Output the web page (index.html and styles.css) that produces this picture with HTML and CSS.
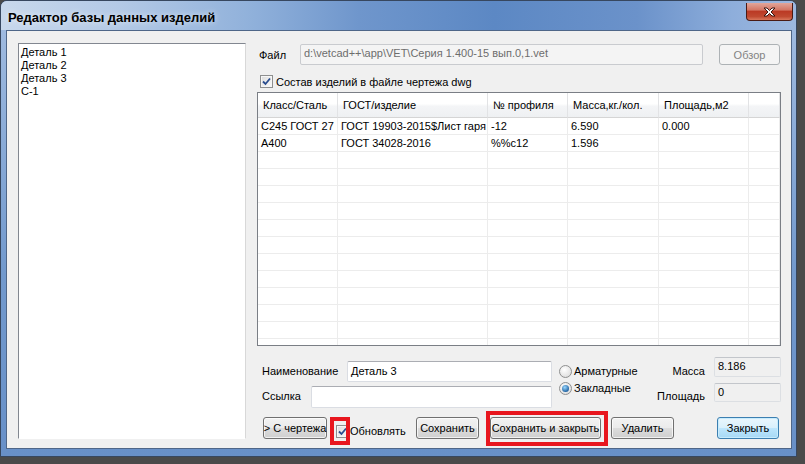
FILE: index.html
```html
<!DOCTYPE html>
<html lang="ru">
    <head>
        <meta charset="utf-8">
        <title>Редактор базы данных изделий</title>
        <link rel="stylesheet" href="styles.css">
    </head>
    <body>
        <div class="window">
            <div class="titleBar">
                <span class="titleText">Редактор базы данных изделий</span>
                <div class="closeBtn">
                    <svg width="13" height="10" viewBox="0 0 13 10"><polygon points="1,1 4,1 6.5,3.5 9,1 12,1 8,5 12,9 9,9 6.5,6.5 4,9 1,9 5,5" fill="#fff" stroke="#3b1510" stroke-width="1"/></svg>
                </div>
            </div>
            <div class="client">
                <div class="itemList">
                    <div>Деталь 1</div>
                    <div>Деталь 2</div>
                    <div>Деталь 3</div>
                    <div>С-1</div>
                </div>
                <div class="rightPanel">
                    <div class="fileRow">
                        <span class="fileLabel">Файл</span>
                        <div class="textBox disabled filePath">d:\vetcad++\app\VET\Серия 1.400-15 вып.0,1.vet</div>
                        <div class="button disabledButton browseButton">Обзор</div>
                    </div>
                    <div class="checkRow">
                        <span class="checkBox"><svg width="11" height="11" viewBox="0 0 11 11"><path d="M2 5.5 L4.5 8 L9 2.5" fill="none" stroke="#2a4d8f" stroke-width="1.8"/></svg></span>
                        <span>Состав изделий в файле чертежа dwg</span>
                    </div>
                    <div class="grid">
                        <table>
                            <tr>
                                <th class="colClass">Класс/Сталь</th>
                                <th class="colGost">ГОСТ/изделие</th>
                                <th class="colProfile">№ профиля</th>
                                <th class="colMass">Масса,кг./кол.</th>
                                <th class="colArea">Площадь,м2</th>
                                <th></th>
                            </tr>
                            <tr><td>С245 ГОСТ 27</td><td>ГОСТ 19903-2015$Лист гаря</td><td>-12</td><td>6.590</td><td>0.000</td><td></td></tr>
                            <tr><td>А400</td><td>ГОСТ 34028-2016</td><td>%%c12</td><td>1.596</td><td></td><td></td></tr>
                            <tr><td></td><td></td><td></td><td></td><td></td><td></td></tr>
                            <tr><td></td><td></td><td></td><td></td><td></td><td></td></tr>
                            <tr><td></td><td></td><td></td><td></td><td></td><td></td></tr>
                            <tr><td></td><td></td><td></td><td></td><td></td><td></td></tr>
                            <tr><td></td><td></td><td></td><td></td><td></td><td></td></tr>
                            <tr><td></td><td></td><td></td><td></td><td></td><td></td></tr>
                            <tr><td></td><td></td><td></td><td></td><td></td><td></td></tr>
                            <tr><td></td><td></td><td></td><td></td><td></td><td></td></tr>
                            <tr><td></td><td></td><td></td><td></td><td></td><td></td></tr>
                            <tr><td></td><td></td><td></td><td></td><td></td><td></td></tr>
                            <tr><td></td><td></td><td></td><td></td><td></td><td></td></tr>
                            <tr><td></td><td></td><td></td><td></td><td></td><td></td></tr>
                        </table>
                    </div>
                    <div class="formArea">
                        <div class="fieldColumn">
                            <div class="nameRow">
                                <span class="fieldLabel">Наименование</span>
                                <div class="textBox nameBox">Деталь 3</div>
                            </div>
                            <div class="linkRow">
                                <span class="fieldLabel">Ссылка</span>
                                <div class="textBox linkBox"></div>
                            </div>
                        </div>
                        <div class="radioColumn">
                            <div class="radioRow"><span class="radio"></span>Арматурные</div>
                            <div class="radioRow"><span class="radio selected"></span>Закладные</div>
                        </div>
                        <div class="valueColumn">
                            <div class="valueRow massRow">
                                <span>Масса</span>
                                <div class="textBox readOnly">8.186</div>
                            </div>
                            <div class="valueRow areaRow">
                                <span>Площадь</span>
                                <div class="textBox readOnly">0</div>
                            </div>
                        </div>
                    </div>
                    <div class="buttonRow">
                        <div class="button fromDrawing">&gt; С чертежа</div>
                        <div class="updateGroup">
                            <span class="checkBox"><svg width="11" height="11" viewBox="0 0 11 11"><path d="M2 5.5 L4.5 8 L9 2.5" fill="none" stroke="#2a4d8f" stroke-width="1.8"/></svg></span>
                            <span class="updateText">Обновлять</span>
                        </div>
                        <div class="button saveButton">Сохранить</div>
                        <div class="button saveCloseButton">Сохранить и закрыть</div>
                        <div class="button deleteButton">Удалить</div>
                        <div class="button defaultButton closeButton">Закрыть</div>
                    </div>
                </div>
            </div>
            <div class="markBox markUpdate"></div>
            <div class="markBox markSave"></div>
        </div>
    </body>
</html>
```

FILE: styles.css
```css
* {
    box-sizing: border-box;
}
html {
    background: #4a4a4a;
}
body {
    margin: 0;
    font-family: "Liberation Sans", Arial, sans-serif;
    font-size: 11px;
    color: #000;
}

/* window frame */
.window {
    position: relative;
    width: 797px;
    height: 457px;
    border: 1px solid #37475f;
    border-radius: 7px 7px 0 0;
    padding: 0 4px 7px 5px;
    background: linear-gradient(to bottom, #a4bee2, #7299cd 60%, #6890c8);
    display: flex;
    flex-direction: column;
}
.titleBar {
    height: 29px;
    margin: 0 -4px 0 -5px;
    padding: 0 3px 0 7px;
    display: flex;
    align-items: flex-start;
    border-radius: 6px 6px 0 0;
    background: linear-gradient(to right, #c8d8ec 0%, #b3c9e6 15%, #8fb0da 32%, #6f96cc 45%, #5c88c4 62%, #6b92ca 80%, #8eaedb 92%, #9db8df 100%);
}
.titleText {
    font-family: "Liberation Sans", Arial, sans-serif;
    font-weight: bold;
    font-size: 13px;
    line-height: 18px;
    padding-top: 8px;
    color: #000;
    text-shadow: 0 0 6px rgba(255, 255, 255, 0.7);
}
.closeBtn {
    margin-left: auto;
    margin-top: 2px;
    width: 47px;
    height: 18px;
    border: 1px solid #4a1a14;
    border-top: 0;
    border-radius: 0 0 4px 4px;
    background: linear-gradient(#e2a69a 0%, #d47866 40%, #bb3a25 50%, #c04a31 80%, #d9775c 100%);
    display: flex;
    align-items: center;
    justify-content: center;
}

/* client area */
.client {
    flex: 1;
    display: flex;
    background: #f0f0f0;
    border: 1px solid #4f6688;
    padding: 12px 9px 9px 11px;
}
.itemList {
    width: 228px;
    height: 396px;
    background: #fff;
    border: 1px solid;
    border-color: #828790 #d8d8d8 #fff #828790;
    padding: 2px 2px;
}
.itemList div {
    height: 13px;
    line-height: 13px;
}
.rightPanel {
    margin-left: 11px;
    width: 524px;
    display: flex;
    flex-direction: column;
}

/* controls */
.textBox {
    background: #fff;
    border: 1px solid #dadde3;
    border-top-color: #abadb3;
    border-radius: 2px;
    padding: 2px 3px;
    line-height: 14px;
    white-space: nowrap;
    overflow: hidden;
}
.textBox.disabled {
    background: #f4f4f4;
    border-color: #c9cbcf;
    color: #6d6d6d;
    padding-top: 1px;
}
.textBox.readOnly {
    background: #f0f0f0;
    border-color: #dcdfe3;
    border-top-color: #c3c6cb;
    padding-top: 1px;
    width: 67px;
}
.button {
    height: 22px;
    display: flex;
    align-items: center;
    justify-content: center;
    border: 1px solid #707070;
    border-radius: 3px;
    background: linear-gradient(#f2f2f2 0%, #ebebeb 49%, #dddddd 50%, #cfcfcf 100%);
    box-shadow: inset 0 0 0 1px rgba(255, 255, 255, 0.7);
    white-space: nowrap;
}
.button.disabledButton {
    border-color: #adb2b5;
    background: #f4f4f4;
    color: #838383;
    box-shadow: none;
}
.button.defaultButton {
    border-color: #3c7fb1;
    background: linear-gradient(#eaf6fd 0%, #d9f0fc 49%, #bee6fd 50%, #a7d9f5 100%);
    box-shadow: inset 0 0 0 1px #c7ecfd;
}
.checkBox {
    width: 13px;
    height: 13px;
    border: 1px solid #8e8f8f;
    background: linear-gradient(135deg, #dcdcdc, #fbfbfb);
    box-shadow: inset 0 0 0 1px #f6f6f6;
    display: flex;
    flex-shrink: 0;
}
.radio {
    position: relative;
    width: 13px;
    height: 13px;
    border-radius: 50%;
    border: 1px solid #8e8f8f;
    background: radial-gradient(circle at 40% 35%, #fff, #d6d6d6);
    margin-right: 2px;
    flex-shrink: 0;
}
.radio.selected::after {
    content: "";
    position: absolute;
    left: 2px;
    top: 2px;
    width: 7px;
    height: 7px;
    border-radius: 50%;
    background: radial-gradient(circle at 40% 35%, #9ad8ff, #1c5e9e 75%);
}

/* file row */
.fileRow {
    display: flex;
    align-items: center;
    height: 21px;
    margin-top: 1px;
}
.fileLabel {
    width: 43px;
    padding-left: 2px;
}
.filePath {
    width: 403px;
    height: 21px;
}
.browseButton {
    width: 61px;
    height: 21px;
    margin-left: 16px;
}
.checkRow {
    display: flex;
    align-items: center;
    height: 13px;
    margin-top: 10px;
    padding-left: 3px;
}
.checkRow .checkBox {
    margin-right: 3px;
}

/* data grid */
.grid {
    margin-top: 4px;
    height: 254px;
    border: 1px solid #7a7e85;
    background: #fff;
    overflow: hidden;
}
.grid table {
    width: 522px;
    border-collapse: separate;
    border-spacing: 0;
    table-layout: fixed;
}
.grid th {
    height: 25px;
    font-weight: normal;
    text-align: left;
    padding: 0 0 0 5px;
    background: linear-gradient(#fff 0%, #fff 45%, #f4f5f7 55%, #eef0f2 100%);
    border-right: 1px solid #e2e3e5;
    border-bottom: 1px solid #d5d5d5;
}
.grid td {
    height: 17px;
    padding: 0 0 0 3px;
    border-right: 1px solid #ececec;
    border-bottom: 1px solid #ececec;
    white-space: nowrap;
    overflow: hidden;
}
.colClass { width: 80px; }
.colGost { width: 150px; }
.colProfile { width: 80px; }
.colMass { width: 91px; }
.colArea { width: 90px; }

/* form */
.formArea {
    display: flex;
    height: 51px;
    margin-top: 11px;
}
.fieldColumn {
    width: 295px;
    display: flex;
    flex-direction: column;
}
.nameRow, .linkRow {
    display: flex;
    margin-top: 4px;
}
.nameRow {
    height: 21px;
}
.linkRow {
    height: 22px;
}
.fieldLabel {
    padding-left: 5px;
    padding-top: 4px;
}
.nameRow .fieldLabel {
    width: 90px;
}
.linkRow .fieldLabel {
    width: 54px;
}
.nameBox {
    width: 205px;
}
.linkBox {
    width: 241px;
}
.radioColumn {
    margin-left: 7px;
    padding-top: 7px;
    display: flex;
    flex-direction: column;
}
.radioRow {
    display: flex;
    align-items: center;
    height: 14px;
}
.radioRow + .radioRow {
    margin-top: 3px;
}
.valueColumn {
    margin-left: auto;
    display: flex;
    flex-direction: column;
    align-items: flex-end;
}
.valueRow {
    display: flex;
}
.valueRow span {
    margin-right: 9px;
}
.massRow {
    height: 20px;
}
.massRow span {
    padding-top: 8px;
}
.areaRow {
    height: 19px;
    margin-top: 6px;
}
.areaRow span {
    padding-top: 7px;
}

/* buttons */
.buttonRow {
    display: flex;
    height: 22px;
    margin-top: 9px;
}
.fromDrawing {
    margin-left: 6px;
    width: 64px;
}
.updateGroup {
    width: 89px;
    display: flex;
    align-items: center;
    padding-left: 9px;
    padding-top: 6px;
}
.updateText {
    margin-left: 1px;
}
.saveButton {
    width: 63px;
}
.saveCloseButton {
    margin-left: 11px;
    width: 111px;
}
.deleteButton {
    margin-left: 10px;
    width: 63px;
}
.closeButton {
    margin-left: 43px;
    width: 62px;
}

/* red highlight marks drawn over the dialog */
.markBox {
    position: absolute;
    border: 4px solid #e8161e;
}
.markUpdate {
    left: 329px;
    top: 416px;
    width: 20px;
    height: 28px;
}
.markSave {
    left: 485px;
    top: 410px;
    width: 122px;
    height: 35px;
}
```
